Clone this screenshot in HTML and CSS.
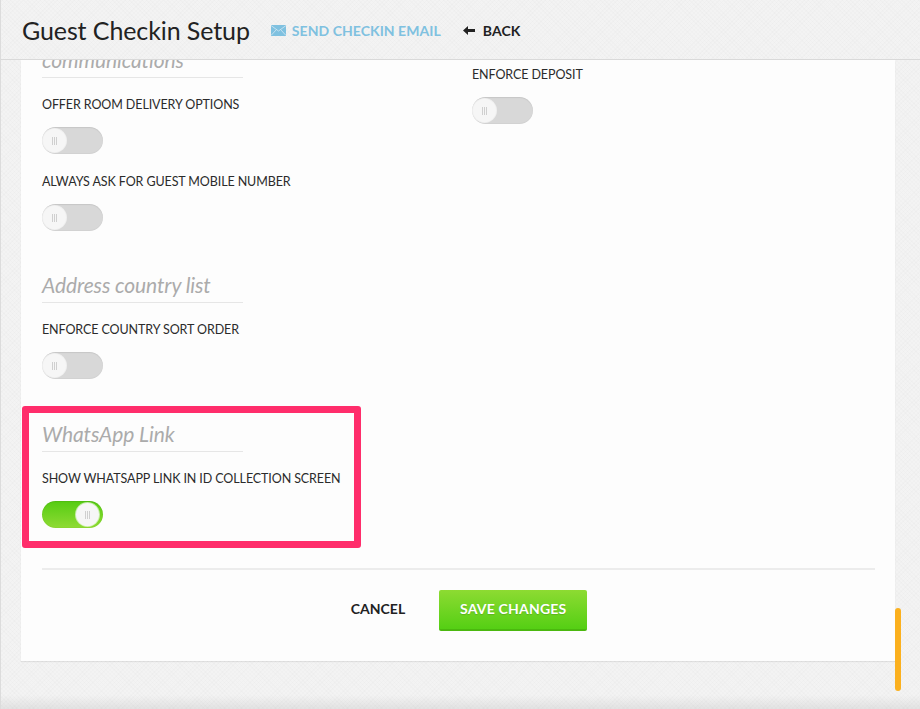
FILE: index.html
```html
<!DOCTYPE html>
<html lang="en">
<head>
<meta charset="utf-8">
<title>Guest Checkin Setup</title>
<link rel="stylesheet" href="styles.css">
</head>
<body>
<div class="page">
  <header class="topbar">
    <h1 class="title">Guest Checkin Setup</h1>
    <a class="action action-mail">
      <svg class="icon-mail" width="15" height="11" viewBox="0 0 15 11"><path d="M0 0h15v11H0z" fill="#7fc1e0"/><path d="M0 .5 7.5 6 15 .5M0 10.5 5.5 4.5M15 10.5 9.5 4.5" fill="none" stroke="#d5e9f3" stroke-width=".8"/></svg>
      SEND CHECKIN EMAIL
    </a>
    <a class="action action-back">
      <svg class="icon-back" width="12" height="9" viewBox="0 0 12 9"><path d="M0 4.5 5 0v3h7v3H5v3z" fill="#222"/></svg>
      BACK
    </a>
  </header>
  <main class="content">
    <section class="card">
      <div class="columns">
        <div class="col">
          <h2 class="heading heading-clipped">communications</h2>
          <div class="field field-first">
            <div class="label">OFFER ROOM DELIVERY OPTIONS</div>
            <div class="toggle"><span class="knob"><i></i></span></div>
          </div>
          <div class="field">
            <div class="label">ALWAYS ASK FOR GUEST MOBILE NUMBER</div>
            <div class="toggle"><span class="knob"><i></i></span></div>
          </div>
          <h2 class="heading heading-address">Address country list</h2>
          <div class="field field-first">
            <div class="label">ENFORCE COUNTRY SORT ORDER</div>
            <div class="toggle"><span class="knob"><i></i></span></div>
          </div>
          <div class="highlighted">
            <div class="highlight-box"></div>
            <h2 class="heading">WhatsApp Link</h2>
            <div class="field field-first">
              <div class="label">SHOW WHATSAPP LINK IN ID COLLECTION SCREEN</div>
              <div class="toggle toggle-on"><span class="knob"><i></i></span></div>
            </div>
          </div>
        </div>
        <div class="col col-right">
          <div class="field">
            <div class="label">ENFORCE DEPOSIT</div>
            <div class="toggle"><span class="knob"><i></i></span></div>
          </div>
        </div>
      </div>
      <div class="footer">
        <a class="cancel">CANCEL</a>
        <a class="save">SAVE CHANGES</a>
      </div>
    </section>
    <div class="scrollbar"></div>
  </main>
</div>
</body>
</html>
```
FILE: styles.css
```css
* { box-sizing: border-box; }
html, body { margin: 0; height: 100%; overflow: hidden; }
body {
  font-family: Lato, "Noto Sans", sans-serif;
  color: #2b2b2b;
  background-color: #f3f3f3;
  background-image:
    repeating-linear-gradient(45deg, rgba(0,0,0,.012) 0 1px, transparent 1px 3px),
    repeating-linear-gradient(-45deg, rgba(0,0,0,.012) 0 1px, transparent 1px 3px);
}
.page { position: relative; height: 709px; border-left: 1px solid #dcdcdc; }
.page::after {
  content: "";
  position: absolute;
  left: 0; right: 0; bottom: 0;
  height: 14px;
  background: linear-gradient(rgba(0,0,0,0), rgba(0,0,0,.07));
}
.topbar {
  position: relative;
  z-index: 2;
  display: flex;
  align-items: center;
  height: 60px;
  padding: 0 0 0 21px;
  border-bottom: 1px solid #d9d9d9;
  background-color: #f3f3f3;
  background-image:
    repeating-linear-gradient(45deg, rgba(0,0,0,.012) 0 1px, transparent 1px 3px),
    repeating-linear-gradient(-45deg, rgba(0,0,0,.012) 0 1px, transparent 1px 3px);
}
.title {
  margin: 0 21px 0 0;
  font-size: 25px;
  font-weight: 400;
  letter-spacing: -.1px;
  color: #222;
  white-space: nowrap;
}
.action {
  display: flex;
  align-items: center;
  gap: 6px;
  margin-top: 2px;
  font-size: 14px;
  font-weight: 700;
  letter-spacing: .05px;
  white-space: nowrap;
}
.action-mail { color: #7fc1e0; margin-right: 22px; }
.action-back { color: #222; gap: 8px; }
.content { position: relative; height: 649px; }
.card {
  width: 874px;
  height: 601px;
  margin-left: 20px;
  padding: 0 20px 0 21px;
  background: #fdfdfd;
  box-shadow: 0 1px 1px rgba(0,0,0,.08);
}
.columns { display: grid; grid-template-columns: 430px 1fr; height: 508px; }
.col-right { padding-top: 4px; }
.heading {
  margin: 0;
  width: 201px;
  height: 33px;
  border-bottom: 1px solid #e6e6e6;
  font-size: 21px;
  line-height: 29px;
  font-weight: 400;
  font-style: italic;
  color: #ababab;
  letter-spacing: -.1px;
}
.heading-clipped { margin-top: -15px; }
.heading-address { margin-top: 22px; }
.field { height: 77px; }
.field-first { margin-top: 16px; }
.label {
  height: 33px;
  font-size: 12.5px;
  line-height: 21px;
  letter-spacing: -.1px;
  color: #2b2b2b;
  white-space: nowrap;
}
.toggle {
  position: relative;
  width: 61px;
  height: 27px;
  border-radius: 14px;
  background: #d8d8d8;
  box-shadow: inset 0 1px 1px rgba(0,0,0,.08), inset 0 -1px 1px rgba(0,0,0,.03);
}
.knob {
  position: absolute;
  left: 1px; top: 2px;
  display: flex;
  align-items: center;
  justify-content: center;
  width: 23px;
  height: 23px;
  border-radius: 50%;
  background: #f6f6f6;
  box-shadow: 0 0 0 1px rgba(255,255,255,.6);
}
.knob i {
  width: 5px;
  height: 8px;
  background: repeating-linear-gradient(90deg, #cfcfcf 0 1px, transparent 1px 2px);
}
.toggle-on { background: linear-gradient(#55cc12, #8fdb34); }
.toggle-on .knob { left: 34px; }
.highlighted { position: relative; padding-top: 23px; }
.highlight-box {
  position: absolute;
  left: -20px; top: 10px;
  width: 339px;
  height: 142px;
  border: 7px solid #ff2d6b;
  border-radius: 3px;
}
.footer {
  display: flex;
  align-items: flex-start;
  justify-content: center;
  gap: 34px;
  height: 93px;
  padding: 20px 0 0 21px;
  border-top: 2px solid #ececec;
}
.cancel {
  margin-top: 10px;
  font-size: 14px;
  font-weight: 700;
  letter-spacing: 0;
  color: #222;
}
.save {
  display: flex;
  align-items: center;
  justify-content: center;
  width: 148px;
  height: 41px;
  padding-bottom: 2px;
  border-radius: 2px;
  border-bottom: 2px solid #4bb80f;
  background: linear-gradient(#8ddb32, #55cf14);
  color: #fff;
  font-size: 14px;
  font-weight: 700;
  letter-spacing: .2px;
  text-shadow: 0 1px 1px rgba(0,0,0,.15);
}
.scrollbar {
  position: absolute;
  left: 894px; top: 548px;
  width: 6px;
  height: 83px;
  border-radius: 3px;
  background: #fbb01e;
}
```
